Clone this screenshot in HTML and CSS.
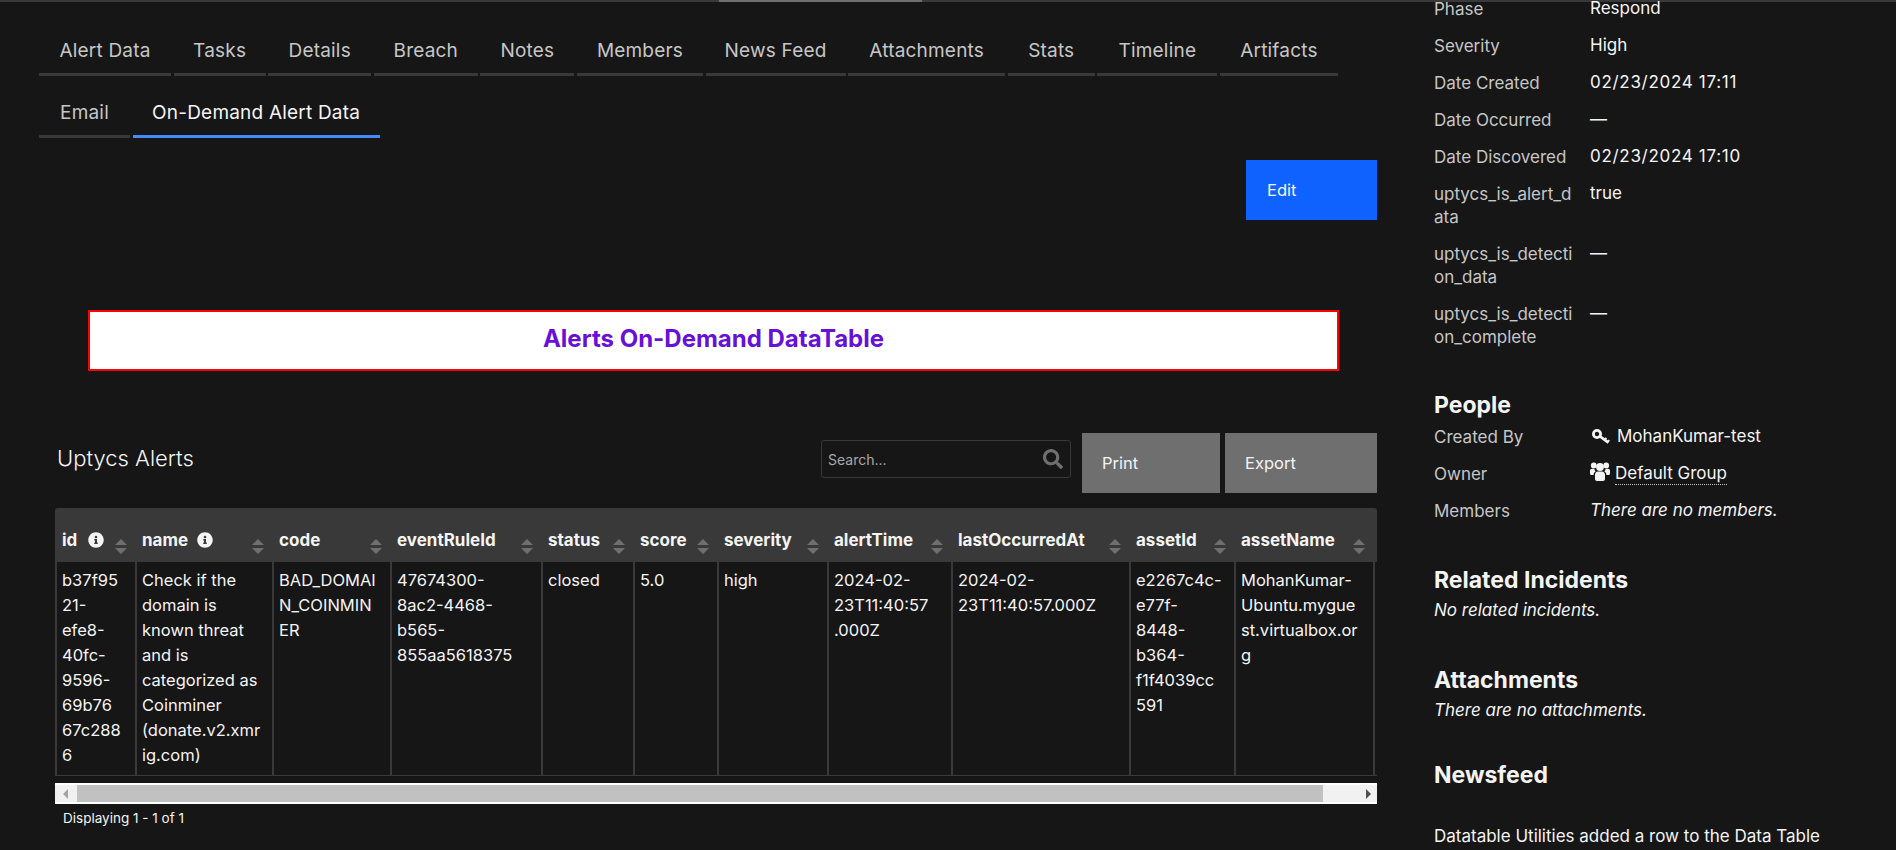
FILE: index.html
```html
<!DOCTYPE html>
<html lang="en">
<head>
<meta charset="utf-8">
<title>Incident</title>
<link rel="stylesheet" href="styles.css">
</head>
<body>
<div class="topbar"><div class="topbar-thumb"></div></div>
<div class="page">
  <main class="main">
    <nav class="tabs tabs-primary">
      <a class="tab">Alert Data</a><a class="tab">Tasks</a><a class="tab">Details</a><a class="tab">Breach</a><a class="tab">Notes</a><a class="tab">Members</a><a class="tab">News Feed</a><a class="tab">Attachments</a><a class="tab">Stats</a><a class="tab">Timeline</a><a class="tab">Artifacts</a>
    </nav>
    <nav class="tabs tabs-secondary">
      <a class="tab">Email</a><a class="tab tab-active">On-Demand Alert Data</a>
    </nav>
    <div class="edit-row"><button class="btn btn-edit">Edit</button></div>
    <div class="banner">Alerts On-Demand DataTable</div>
    <div class="dt-toolbar">
      <h2 class="dt-title">Uptycs Alerts</h2>
      <div class="search">
        <span class="search-text">Search...</span>
        <svg class="search-icon" viewBox="0 0 512 512"><path d="M505 442.7L405.3 343c-4.5-4.5-10.6-7-17-7H372c27.6-35.3 44-79.7 44-128C416 93.1 322.9 0 208 0S0 93.1 0 208s93.1 208 208 208c48.3 0 92.7-16.4 128-44v16.3c0 6.4 2.5 12.5 7 17l99.7 99.7c9.4 9.4 24.6 9.4 33.9 0l28.3-28.3c9.4-9.4 9.4-24.6.1-34zM208 336c-70.7 0-128-57.2-128-128 0-70.7 57.2-128 128-128 70.7 0 128 57.2 128 128 0 70.7-57.2 128-128 128z"/></svg>
      </div>
      <button class="btn btn-grey btn-print">Print</button>
      <button class="btn btn-grey btn-export">Export</button>
    </div>
    <div class="dt-wrap">
      <table class="dt">
        <colgroup>
          <col class="c-id"><col class="c-name"><col class="c-code"><col class="c-rule"><col class="c-status"><col class="c-score"><col class="c-sev"><col class="c-time"><col class="c-last"><col class="c-aid"><col class="c-aname"><col class="c-rest">
        </colgroup>
        <thead>
          <tr>
            <th><div class="th-in"><span class="th-label">id<svg class="info info-id" viewBox="0 0 512 512"><path d="M256 8C119 8 8 119 8 256s111 248 248 248 248-111 248-248S393 8 256 8zm0 110c23.2 0 42 18.8 42 42s-18.8 42-42 42-42-18.8-42-42 18.8-42 42-42zm56 254c0 6.6-5.4 12-12 12h-88c-6.6 0-12-5.4-12-12v-24c0-6.6 5.4-12 12-12h12v-64h-12c-6.6 0-12-5.4-12-12v-24c0-6.6 5.4-12 12-12h64c6.6 0 12 5.4 12 12v100h12c6.6 0 12 5.4 12 12v24z"/></svg></span><svg class="sort" viewBox="0 0 12 15"><path d="M6 0l6 6H0zM6 15L0 9h12z"/></svg></div></th>
            <th><div class="th-in"><span class="th-label">name<svg class="info" viewBox="0 0 512 512"><path d="M256 8C119 8 8 119 8 256s111 248 248 248 248-111 248-248S393 8 256 8zm0 110c23.2 0 42 18.8 42 42s-18.8 42-42 42-42-18.8-42-42 18.8-42 42-42zm56 254c0 6.6-5.4 12-12 12h-88c-6.6 0-12-5.4-12-12v-24c0-6.6 5.4-12 12-12h12v-64h-12c-6.6 0-12-5.4-12-12v-24c0-6.6 5.4-12 12-12h64c6.6 0 12 5.4 12 12v100h12c6.6 0 12 5.4 12 12v24z"/></svg></span><svg class="sort" viewBox="0 0 12 15"><path d="M6 0l6 6H0zM6 15L0 9h12z"/></svg></div></th>
            <th><div class="th-in"><span class="th-label">code</span><svg class="sort" viewBox="0 0 12 15"><path d="M6 0l6 6H0zM6 15L0 9h12z"/></svg></div></th>
            <th><div class="th-in"><span class="th-label">eventRuleId</span><svg class="sort" viewBox="0 0 12 15"><path d="M6 0l6 6H0zM6 15L0 9h12z"/></svg></div></th>
            <th><div class="th-in"><span class="th-label">status</span><svg class="sort" viewBox="0 0 12 15"><path d="M6 0l6 6H0zM6 15L0 9h12z"/></svg></div></th>
            <th><div class="th-in"><span class="th-label">score</span><svg class="sort" viewBox="0 0 12 15"><path d="M6 0l6 6H0zM6 15L0 9h12z"/></svg></div></th>
            <th><div class="th-in"><span class="th-label">severity</span><svg class="sort" viewBox="0 0 12 15"><path d="M6 0l6 6H0zM6 15L0 9h12z"/></svg></div></th>
            <th><div class="th-in"><span class="th-label">alertTime</span><svg class="sort" viewBox="0 0 12 15"><path d="M6 0l6 6H0zM6 15L0 9h12z"/></svg></div></th>
            <th><div class="th-in"><span class="th-label">lastOccurredAt</span><svg class="sort" viewBox="0 0 12 15"><path d="M6 0l6 6H0zM6 15L0 9h12z"/></svg></div></th>
            <th><div class="th-in"><span class="th-label">assetId</span><svg class="sort" viewBox="0 0 12 15"><path d="M6 0l6 6H0zM6 15L0 9h12z"/></svg></div></th>
            <th><div class="th-in"><span class="th-label">assetName</span><svg class="sort" viewBox="0 0 12 15"><path d="M6 0l6 6H0zM6 15L0 9h12z"/></svg></div></th>
            <th></th>
          </tr>
        </thead>
        <tbody>
          <tr>
            <td>b37f95<br>21-<br>efe8-<br>40fc-<br>9596-<br>69b76<br>67c288<br>6</td>
            <td>Check if the<br>domain is<br>known threat<br>and is<br>categorized as<br>Coinminer<br>(donate.v2.xmr<br>ig.com)</td>
            <td>BAD_DOMAI<br>N_COINMIN<br>ER</td>
            <td>47674300-<br>8ac2-4468-<br>b565-<br>855aa5618375</td>
            <td>closed</td>
            <td>5.0</td>
            <td>high</td>
            <td>2024-02-<br>23T11:40:57<br>.000Z</td>
            <td>2024-02-<br>23T11:40:57.000Z</td>
            <td>e2267c4c-<br>e77f-<br>8448-<br>b364-<br>f1f4039cc<br>591</td>
            <td>MohanKumar-<br>Ubuntu.mygue<br>st.virtualbox.or<br>g</td>
            <td></td>
          </tr>
        </tbody>
      </table>
    </div>
    <div class="hscroll">
      <span class="arrow arrow-left"></span>
      <div class="hscroll-thumb"></div>
      <span class="arrow arrow-right"></span>
    </div>
    <div class="dt-info">Displaying 1 - 1 of 1</div>
  </main>

  <aside class="side">
    <dl class="fields fields-top">
      <dt>Phase</dt><dd>Respond</dd>
      <dt>Severity</dt><dd>High</dd>
      <dt>Date Created</dt><dd class="num">02/23/2024 17:11</dd>
      <dt>Date Occurred</dt><dd>—</dd>
      <dt>Date Discovered</dt><dd class="num">02/23/2024 17:10</dd>
      <dt>uptycs_is_alert_d<br>ata</dt><dd>true</dd>
      <dt>uptycs_is_detecti<br>on_data</dt><dd>—</dd>
      <dt>uptycs_is_detecti<br>on_complete</dt><dd>—</dd>
    </dl>
    <h3 class="side-h side-h-people">People</h3>
    <dl class="fields">
      <dt>Created By</dt>
      <dd class="with-icon"><svg class="key" viewBox="0 0 18 16"><circle cx="5" cy="5" r="3.6" fill="none" stroke="#f4f4f4" stroke-width="2.8"/><path d="M8 7.4l8.4 6.2" fill="none" stroke="#f4f4f4" stroke-width="2.6"/><path d="M12.4 11.2l2-2.2M15.4 13.2l1.8-2" fill="none" stroke="#f4f4f4" stroke-width="2"/></svg>MohanKumar-test</dd>
      <dt>Owner</dt>
      <dd class="with-icon"><svg class="users" viewBox="0 0 20 19"><circle cx="3.8" cy="3.4" r="2.9"/><circle cx="16.2" cy="3.4" r="2.9"/><circle cx="10" cy="5" r="3.9"/><path d="M5 13c0-2.2 1.4-3.6 3-3.6h4c1.6 0 3 1.4 3 3.6v4c0 1.2-.9 2-2 2H7c-1.1 0-2-.8-2-2zM0 8.8c0-1.1.9-2 2-2h2.3c.2 1 .7 1.9 1.4 2.5C4.4 10 3.6 11.4 3.6 13H1.2C.5 13 0 12.5 0 11.8zM20 8.8c0-1.1-.9-2-2-2h-2.3c-.2 1-.7 1.9-1.4 2.5 1.3.7 2.1 2.1 2.1 3.7h2.4c.7 0 1.2-.5 1.2-1.2z"/></svg><span class="link">Default Group</span></dd>
      <dt>Members</dt><dd><em>There are no members.</em></dd>
    </dl>
    <h3 class="side-h side-h-related">Related Incidents</h3>
    <p class="side-note"><em>No related incidents.</em></p>
    <h3 class="side-h side-h-attach">Attachments</h3>
    <p class="side-note"><em>There are no attachments.</em></p>
    <h3 class="side-h side-h-news">Newsfeed</h3>
    <p class="side-feed">Datatable Utilities added a row to the Data Table</p>
  </aside>
</div>
</body>
</html>
```
FILE: styles.css
```css
* { box-sizing: border-box; }
html, body { margin: 0; height: 850px; overflow: hidden; }
body {
  background: #161616;
  color: #f4f4f4;
  font-family: Inter, "Noto Sans", "Liberation Sans", sans-serif;
  font-size: 16.5px;
}
.topbar { height: 2px; background: #393939; }
.topbar-thumb { height: 2px; width: 203px; margin-left: 719px; background: #6f6f6f; }
.page { display: flex; height: 848px; }
.main { width: 1338px; margin-left: 39px; flex: none; }

.tabs { display: grid; gap: 2.6px; }
.tabs-primary {
  margin-top: 26px;
  grid-template-columns: 132px 92px 103px 104px 94px 126px 140px 157px 87px 120px 118px;
}
.tabs-secondary {
  margin-top: 14px;
  grid-template-columns: 91px 247px;
}
.tab {
  height: 48px;
  line-height: 45px;
  text-align: center;
  font-size: 19px;
  letter-spacing: .2px;
  color: #c6c6c6;
  border-bottom: 3px solid #393939;
  white-space: nowrap;
}
.tab-active { color: #f4f4f4; border-bottom-color: #4589ff; }

.btn { border: 0; color: #f4f4f4; font: inherit; text-align: left; display: block; }
.edit-row { display: flex; justify-content: flex-end; margin-top: 22px; }
.btn-edit { width: 131px; height: 60px; background: #0f62fe; padding: 0 0 0 21px; }

.banner {
  width: 1251px;
  height: 61px;
  margin: 90px 0 0 49px;
  background: #fff;
  border: 2px solid #f00;
  color: #6610d8;
  font-weight: 700;
  font-size: 24px;
  line-height: 53px;
  text-align: center;
}

.dt-toolbar { display: flex; align-items: center; margin: 62px 0 0 16px; height: 60px; }
.dt-title { margin: 0 0 10px 2px; font-weight: 300; font-size: 22px; flex: 1; color: #f4f4f4; }
.search {
  width: 250px;
  height: 38px;
  margin: 0 11px 8px 0;
  border: 1px solid #393939;
  border-radius: 3px;
  display: flex;
  align-items: center;
  justify-content: space-between;
  padding: 0 7px 0 6px;
}
.search-text { font-size: 14px; color: #a8a8a8; }
.search-icon { width: 20px; height: 20px; fill: #6f6f6f; }
.btn-grey { height: 60px; background: #6f6f6f; padding: 0 0 0 20px; }
.btn-print { width: 138px; margin-right: 5px; }
.btn-export { width: 152px; }

.dt-wrap { margin: 15px 0 0 16px; width: 1322px; overflow: hidden; border-radius: 3px 3px 0 0; }
.dt { border-collapse: separate; border-spacing: 0; table-layout: fixed; width: 1322px; }
.c-id { width: 80px; } .c-name { width: 137px; } .c-code { width: 118px; } .c-rule { width: 151px; }
.c-status { width: 92px; } .c-score { width: 84px; } .c-sev { width: 110px; } .c-time { width: 124px; }
.c-last { width: 178px; } .c-aid { width: 105px; } .c-aname { width: 139px; } .c-rest { width: 4px; }
.dt th {
  background: #393939;
  height: 54px;
  padding: 0 8px 8px 7px;
  vertical-align: bottom;
  text-align: left;
  font-size: 17px;
  font-weight: 700;
  color: #f4f4f4;
}
.th-in { display: flex; justify-content: space-between; align-items: flex-end; }
.th-label { display: flex; align-items: center; line-height: 20px; margin-bottom: 4px; white-space: nowrap; }
.info { width: 16px; height: 16px; fill: #f4f4f4; margin-left: 9px; }
.info-id { margin-left: 11px; }
.sort { width: 12px; height: 15px; fill: #6f6f6f; flex: none; }
.dt td {
  vertical-align: top;
  padding: 6px 6px 7px 5px;
  border-left: 2px solid #393939;
  border-bottom: 1px solid #393939;
  font-size: 16.5px;
  line-height: 25px;
  white-space: nowrap;
  overflow: hidden;
}

.hscroll {
  margin: 7px 0 0 16px;
  width: 1322px;
  height: 21px;
  background: #f1f1f1;
  border: 2px solid #fff;
  border-width: 2px 0;
  position: relative;
  display: flex;
  align-items: center;
  justify-content: space-between;
  padding: 0 6px 0 8px;
}
.hscroll-thumb { position: absolute; left: 22px; right: 54px; top: 0; bottom: 0; background: #c1c1c1; }
.arrow { width: 0; height: 0; border: 5px solid transparent; }
.arrow-left { border-right-color: #a3a3a3; border-left-width: 0; }
.arrow-right { border-left-color: #505050; border-right-width: 0; }
.dt-info { margin: 4px 0 0 24px; font-size: 13.5px; line-height: 20px; }

.side { width: 420px; margin-left: 57px; flex: none; font-size: 17px; }
.fields { display: grid; grid-template-columns: 156px 1fr; margin: 0; }
.fields-top { margin-top: -11px; }
.fields dt, .fields dd { margin: 0; padding: 7px 0; line-height: 23px; }
.fields dt { color: #c6c6c6; white-space: nowrap; }
.fields dd { color: #f4f4f4; position: relative; top: -1px; }
.fields dd.num { letter-spacing: .7px; }
.with-icon { display: flex; align-items: center; }
.key { width: 18px; height: 16px; margin: 0 7px 0 2px; flex: none; }
.users { width: 20px; height: 19px; fill: #f4f4f4; margin: -4px 5px 0 0; flex: none; }
.link { border-bottom: 1px dotted #c6c6c6; line-height: 21px; }

.side-h { margin: 0; font-size: 23px; font-weight: 700; line-height: 28px; color: #f4f4f4; }
.side-h-people { margin-top: 35px; }
.side-h-related { margin-top: 36px; }
.side-h-attach { margin-top: 44px; }
.side-h-news { margin-top: 39px; }
.side-note { margin: 0; line-height: 23px; margin-top: 5px; }
.side-feed { margin: 36px 0 0; line-height: 23px; }
```
